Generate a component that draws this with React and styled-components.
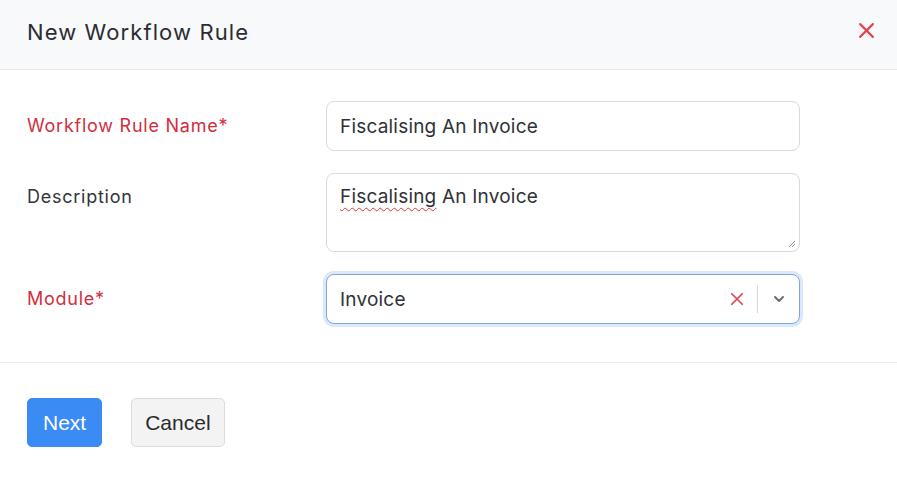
import React from 'react'
import styled, { createGlobalStyle } from 'styled-components'

const GlobalStyle = createGlobalStyle`
  html, body {
    margin: 0;
    padding: 0;
    background: #ffffff;
    font-family: Inter, "Noto Sans", sans-serif;
  }
`

const Modal = styled.div`
  width: 897px;
  min-height: 477px;
  display: flex;
  flex-direction: column;
  background: #fff;
`

const Header = styled.header`
  flex-shrink: 0;
  height: 69px;
  display: flex;
  align-items: center;
  justify-content: space-between;
  padding: 0 18px 0 27px;
  background: #f8f9fb;
  border-bottom: 1px solid #e9eaed;
`

const Title = styled.h2`
  margin: 0;
  font-size: 22px;
  letter-spacing: 1.1px;
  font-weight: 400;
  color: #2b2d33;
  padding-bottom: 6px;
`

const CloseButton = styled.button`
  border: 0;
  background: none;
  padding: 4px;
  display: flex;
  margin-bottom: 8px;
  cursor: pointer;
`

const Body = styled.div`
  padding: 31px 97px 38px 27px;
  display: flex;
  flex-direction: column;
  gap: 22px;
  border-bottom: 1px solid #ececee;
`

const Row = styled.div`
  display: grid;
  grid-template-columns: 299px 1fr;
  align-items: start;
`

const Label = styled.label`
  font-size: 18px;
  letter-spacing: 0.75px;
  color: ${(p) => (p.required ? '#cf2f3e' : '#333438')};
  padding-top: ${(p) => p.top || 13}px;
`

const Field = styled.div`
  position: relative;
  height: ${(p) => p.height || 50}px;
  box-sizing: border-box;
  border: 1px solid ${(p) => (p.focused ? '#7ea6dc' : '#d9dadd')};
  box-shadow: ${(p) => (p.focused ? '0 0 0 3px #dbe8fb' : 'none')};
  border-radius: 8px;
  display: flex;
  align-items: ${(p) => (p.multiline ? 'flex-start' : 'center')};
  padding: ${(p) => (p.multiline ? '11px 13px' : '0 13px')};
  font-size: 19px;
  letter-spacing: 0.2px;
  color: #2f3136;
  background: #fff;
`

const Value = styled.span`
  flex: 1;
`

const Misspelled = styled.span`
  text-decoration: underline wavy #d43b3b;
  text-decoration-thickness: 1px;
  text-underline-offset: 4px;
`

const Grip = styled.svg`
  position: absolute;
  right: 3px;
  bottom: 3px;
`

const SelectControls = styled.div`
  display: flex;
  align-items: center;
  gap: 13px;
  margin-right: -1px;
`

const Separator = styled.span`
  width: 1px;
  height: 28px;
  background: #d8d9dc;
`

const Footer = styled.div`
  display: flex;
  gap: 29px;
  padding: 35px 27px;
`

const Button = styled.button`
  height: 49px;
  padding: 0 ${(p) => (p.primary ? 15 : 13)}px;
  border-radius: 5px;
  font-family: "Liberation Sans", Arial, sans-serif;
  font-size: 21px;
  cursor: pointer;
  border: 1px solid ${(p) => (p.primary ? '#3a8bf4' : '#dcdcdc')};
  background: ${(p) => (p.primary ? '#3a8bf4' : '#f3f3f4')};
  color: ${(p) => (p.primary ? '#ffffff' : '#2a2b2e')};
`

const Cross = ({ size = 16, color = '#e0464f', width = 2.2 }) => (
  <svg width={size} height={size} viewBox="0 0 16 16">
    <path d="M2 2 L14 14 M14 2 L2 14" stroke={color} strokeWidth={width} strokeLinecap="round" />
  </svg>
)

const App = () => {
  return (
    <Modal>
      <GlobalStyle />
      <Header>
        <Title>New Workflow Rule</Title>
        <CloseButton>
          <Cross size={17} width={2} />
        </CloseButton>
      </Header>
      <Body>
        <Row>
          <Label required top={14}>Workflow Rule Name*</Label>
          <Field>
            <Value>Fiscalising An Invoice</Value>
          </Field>
        </Row>
        <Row>
          <Label>Description</Label>
          <Field height={79} multiline>
            <Value>
              <Misspelled>Fiscalising</Misspelled> An Invoice
            </Value>
            <Grip width="9" height="9" viewBox="0 0 9 9">
              <path d="M8 2 L2 8 M8 5 L5 8" stroke="#8a8b8f" strokeWidth="1" />
            </Grip>
          </Field>
        </Row>
        <Row>
          <Label required top={14}>Module*</Label>
          <Field focused>
            <Value>Invoice</Value>
            <SelectControls>
              <Cross size={14} width={2} />
              <Separator />
              <svg width="16" height="16" viewBox="0 0 16 16">
                <path d="M4 6 L8 10 L12 6" stroke="#6b6d72" strokeWidth="2" fill="none" strokeLinecap="round" strokeLinejoin="round" />
              </svg>
            </SelectControls>
          </Field>
        </Row>
      </Body>
      <Footer>
        <Button primary>Next</Button>
        <Button>Cancel</Button>
      </Footer>
    </Modal>
  )
}

export default App
